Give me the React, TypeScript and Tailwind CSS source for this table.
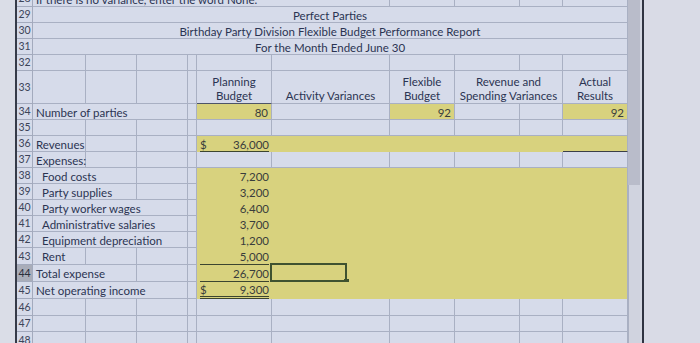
import React from 'react';

type CellProps = { w: string; children?: React.ReactNode; cls?: string; br?: boolean; bb?: boolean };

function Cell({ w, children, cls = '', br = true, bb = true }: CellProps) {
  return (
    <div
      className={`relative shrink-0 h-full flex items-center whitespace-nowrap ${w} ${br ? 'border-r border-r-[#a9b0c3]' : ''} ${bb ? 'border-b border-b-[#a9b0c3]' : ''} ${cls}`}
    >
      {children}
    </div>
  );
}

function Row({ h, n, sel, children }: { h: string; n: string; sel?: boolean; children: React.ReactNode }) {
  return (
    <div className={`flex shrink-0 ${h}`}>
      <div
        className={`w-[16px] shrink-0 h-full flex items-center justify-center border-r border-b border-[#a3aabd] text-[10.5px] ${sel ? 'bg-[#a9adb9] text-[#2a2f3c]' : 'text-[#3c4459]'}`}
      >
        {n}
      </div>
      {children}
    </div>
  );
}

const A = 'w-[53px]';
const B = 'w-[51px]';
const C = 'w-[51px]';
const D = 'w-[9px]';
const E = 'w-[75px]';
const F = 'w-[118px]';
const G = 'w-[65px]';
const H = 'w-[65px]';
const I = 'w-[43px]';
const J = 'w-[65px]';
const AB = 'w-[104px]';
const ABC = 'w-[155px]';
const AF = 'w-[357px]';
const AJ = 'w-[595px]';
const HI = 'w-[108px]';
const FJ = 'w-[356px]';
const FI = 'w-[291px]';

const Y = 'bg-[#d8d27e]';

function Rest() {
  return (
    <>
      <Cell w={F} />
      <Cell w={G} />
      <Cell w={H} />
      <Cell w={I} />
      <Cell w={J} />
    </>
  );
}

function Blank({ h, n }: { h: string; n: string }) {
  return (
    <Row h={h} n={n}>
      <Cell w={A} />
      <Cell w={B} />
      <Cell w={C} />
      <Cell w={D} />
      <Cell w={E} />
      <Rest />
    </Row>
  );
}

function Label({ w, text, indent }: { w: string; text: string; indent?: boolean }) {
  return (
    <Cell w={w}>
      <span className={`${indent ? 'pl-[9px]' : 'pl-[3px]'} pt-[2px] text-[#2b3452]`}>{text}</span>
    </Cell>
  );
}

function ExpRow({
  h,
  n,
  label,
  w,
  value,
  indent,
  under,
  dollar,
  dbl,
  sel,
  selBox,
}: {
  h: string;
  n: string;
  label: string;
  w: string;
  value: string;
  indent?: boolean;
  under?: boolean;
  dollar?: boolean;
  dbl?: boolean;
  sel?: boolean;
  selBox?: boolean;
}) {
  const rest =
    w === A ? (
      <>
        <Cell w={B} />
        <Cell w={C} />
      </>
    ) : w === AB ? (
      <Cell w={C} />
    ) : null;
  return (
    <Row h={h} n={n} sel={sel}>
      <Label w={w} text={label} indent={indent} />
      {rest}
      <Cell w={D} />
      <Cell w={E} br={false} bb={false} cls={`${Y} px-[3px]`}>
        <div
          className={`w-full h-full flex items-center justify-between pt-[2px] text-[#3a3d3c] ${under ? 'border-b border-[#3c4530]' : ''} ${dbl ? 'border-b-[3px] border-double border-[#3c4530]' : ''}`}
        >
          <span>{dollar ? '$' : ''}</span>
          <span>{value}</span>
        </div>
      </Cell>
      <Cell w={FJ} bb={false} cls={Y}>
        {selBox && (
          <div className="absolute left-[-2px] top-[-2px] w-[77px] h-[19px] border-2 border-[#3f5230]">
            <div className="absolute right-[-4px] bottom-[-4px] w-[5px] h-[5px] bg-[#3f5230]" />
          </div>
        )}
      </Cell>
    </Row>
  );
}

export default function App() {
  return (
    <div
      className="w-[700px] h-[343px] overflow-hidden flex bg-[#d6dbea] text-[11.5px] leading-none"
      style={{ fontFamily: 'Lato, "Open Sans", sans-serif' }}
    >
      <div className="w-[15px] shrink-0 bg-[#dadde7]" />
      <div className="w-[2px] shrink-0 bg-[#363b49]" />
      <div className="w-[611px] shrink-0 flex flex-col">
        <div className="-mt-[9px] flex flex-col">
          <Row h="h-[16px]" n="28">
            <Cell w={AF}>
              <span className="pl-[3px] pt-[2px] text-[#2b3452]">If there is no variance, enter the word None.</span>
            </Cell>
            <Cell w={G} />
            <Cell w={H} />
            <Cell w={I} />
            <Cell w={J} />
          </Row>
          <Row h="h-[16px]" n="29">
            <Cell w={AJ} cls="justify-center">
              <span className="pt-[3px] text-[#2b3452]">Perfect Parties</span>
            </Cell>
          </Row>
          <Row h="h-[16px]" n="30">
            <Cell w={AJ} cls="justify-center">
              <span className="pt-[3px] text-[#2b3452]">Birthday Party Division Flexible Budget Performance Report</span>
            </Cell>
          </Row>
          <Row h="h-[16px]" n="31">
            <Cell w={AJ} cls="justify-center">
              <span className="pt-[3px] text-[#2b3452]">For the Month Ended June 30</span>
            </Cell>
          </Row>
          <Blank h="h-[16px]" n="32" />
          <Row h="h-[33px]" n="33">
            <Cell w={A} />
            <Cell w={B} />
            <Cell w={C} />
            <Cell w={D} />
            <Cell w={E} cls="!items-end justify-center text-center leading-[14px] !border-b-[#4d5468]">
              <span className="text-[#2b3452]">
                Planning
                <br />
                Budget
              </span>
            </Cell>
            <Cell w={F} cls="!items-end justify-center leading-[14px]">
              <span className="text-[#2b3452]">Activity Variances</span>
            </Cell>
            <Cell w={G} cls="!items-end justify-center text-center leading-[14px]">
              <span className="text-[#2b3452]">
                Flexible
                <br />
                Budget
              </span>
            </Cell>
            <Cell w={HI} cls="!items-end justify-center text-center leading-[14px]">
              <span className="text-[#2b3452]">
                Revenue and
                <br />
                Spending Variances
              </span>
            </Cell>
            <Cell w={J} cls="!items-end justify-center text-center leading-[14px]">
              <span className="text-[#2b3452]">
                Actual
                <br />
                Results
              </span>
            </Cell>
          </Row>
          <Row h="h-[16px]" n="34">
            <Label w={ABC} text="Number of parties" />
            <Cell w={D} />
            <Cell w={E} cls={`${Y} justify-end pr-[3px]`}>
              <span className="pt-[2px] text-[#3a3d3c]">80</span>
            </Cell>
            <Cell w={F} />
            <Cell w={G} cls={`${Y} justify-end pr-[3px]`}>
              <span className="pt-[2px] text-[#3a3d3c]">92</span>
            </Cell>
            <Cell w={H} />
            <Cell w={I} />
            <Cell w={J} cls={`${Y} justify-end pr-[3px]`}>
              <span className="pt-[2px] text-[#3a3d3c]">92</span>
            </Cell>
          </Row>
          <Blank h="h-[16px]" n="35" />
          <Row h="h-[16px]" n="36">
            <Label w={A} text="Revenues" />
            <Cell w={B} />
            <Cell w={C} />
            <Cell w={D} />
            <Cell w={E} br={false} bb={false} cls={`${Y} px-[3px]`}>
              <div className="w-full h-full flex items-center justify-between pt-[2px] text-[#3a3d3c] border-b border-[#3c4530]">
                <span>$</span>
                <span>36,000</span>
              </div>
            </Cell>
            <Cell w={FI} br={false} bb={false} cls={Y} />
            <Cell w={J} cls={`${Y} !border-b-[#3a3f48]`} />
          </Row>
          <Row h="h-[16px]" n="37">
            <Label w={A} text="Expenses:" />
            <Cell w={B} />
            <Cell w={C} />
            <Cell w={D} />
            <Cell w={E} />
            <Rest />
          </Row>
          <ExpRow h="h-[16px]" n="38" label="Food costs" w={AB} value="7,200" indent />
          <ExpRow h="h-[16px]" n="39" label="Party supplies" w={AB} value="3,200" indent />
          <ExpRow h="h-[16px]" n="40" label="Party worker wages" w={ABC} value="6,400" indent />
          <ExpRow h="h-[16px]" n="41" label="Administrative salaries" w={ABC} value="3,700" indent />
          <ExpRow h="h-[16px]" n="42" label="Equipment depreciation" w={ABC} value="1,200" indent />
          <ExpRow h="h-[17px]" n="43" label="Rent" w={A} value="5,000" indent under />
          <ExpRow h="h-[17px]" n="44" label="Total expense" w={AB} value="26,700" under sel selBox />
          <ExpRow h="h-[17px]" n="45" label="Net operating income" w={ABC} value="9,300" dollar dbl />
          <Blank h="h-[17px]" n="46" />
          <Blank h="h-[16px]" n="47" />
          <Blank h="h-[17px]" n="48" />
        </div>
      </div>
      <div className="w-[12px] shrink-0 flex flex-col">
        <div className="h-[185px] bg-[#b9bcca]" />
        <div className="flex-1 bg-[#d0d3df] border-l border-[#aab0c2]" />
      </div>
      <div className="w-[2px] shrink-0 bg-[#d3d6e1]" />
      <div className="w-[2px] shrink-0 bg-[#2f3341]" />
      <div className="flex-1 bg-[#d9dbe6]" />
    </div>
  );
}
